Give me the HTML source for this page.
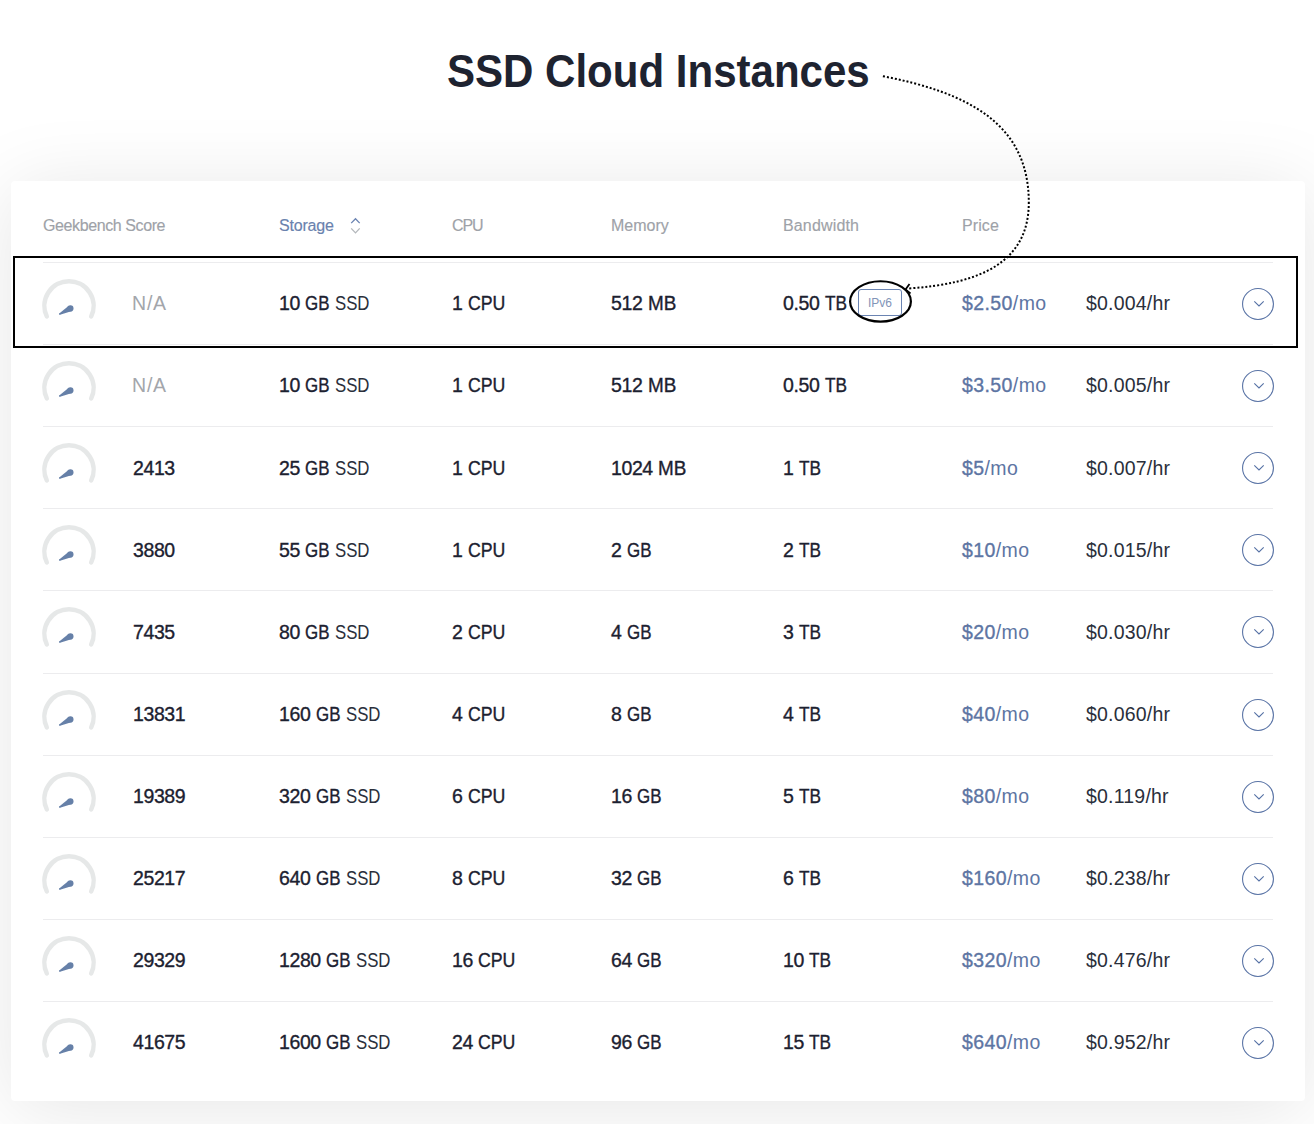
<!DOCTYPE html><html><head><meta charset="utf-8"><style>
*{margin:0;padding:0;box-sizing:border-box}
html,body{width:1314px;height:1124px;overflow:hidden;background:#fff;font-family:"Liberation Sans",sans-serif}
.title{position:absolute;left:0;top:46px;width:1314px;text-align:center;font-size:46px;font-weight:bold;color:#1e2330;letter-spacing:0px;line-height:50px;}
.title span{display:inline-block;transform:scaleX(0.914);transform-origin:50% 50%;position:relative;left:1px}
.card{position:absolute;left:11px;top:181px;width:1294px;height:920px;background:#fff;border-radius:4px;box-shadow:0 8px 80px rgba(0,0,0,0.1)}
.h{position:absolute;top:217px;font-size:16px;line-height:18px;color:#9ea2a8;-webkit-text-stroke:0.15px currentColor;white-space:nowrap;letter-spacing:-0.4px}
.sep{position:absolute;left:43px;width:1230px;height:1px;background:#ececee}
.t{position:absolute;font-size:19.5px;line-height:20px;color:#1c2130;white-space:nowrap}
.na{color:#a3a6ab}
.rg{color:#2a2f3b}
.m{-webkit-text-stroke:0.35px currentColor}
.u{display:inline-block;transform-origin:0 50%}
.d{letter-spacing:-0.4px}
.blue{color:#5d75a3}
.h.blue{color:#6a82ae}
.btn2{position:absolute;left:1242px}
.gauge{position:absolute;left:36px;width:66px;height:50px}
.box{position:absolute;left:13px;top:256px;width:1285px;height:92px;border:2px solid #000}
.ipv6{position:absolute;left:858px;top:289px;width:44px;height:27px;border:1px solid #6b84b2;border-radius:3px;font-size:12px;line-height:27px;text-align:center;color:#8194b8}
svg.ov{position:absolute;left:0;top:0}
</style></head><body>
<div class="card"></div>
<div class="title"><span>SSD Cloud Instances</span></div>
<div class="h " style="left:43px;letter-spacing:-0.4px">Geekbench Score</div>
<div class="h blue" style="left:279px;letter-spacing:-0.2px">Storage</div>
<div class="h " style="left:452px;letter-spacing:-1.1px">CPU</div>
<div class="h " style="left:611px;letter-spacing:0px">Memory</div>
<div class="h " style="left:783px;letter-spacing:0.15px">Bandwidth</div>
<div class="h " style="left:962px;letter-spacing:0.1px">Price</div>
<svg class="ov" width="1314" height="1124" style="pointer-events:none"><path d="M351.2 223.1 L355.5 218.7 L359.7 223.1" fill="none" stroke="#6b84b2" stroke-width="1.3"/><path d="M351.2 228.4 L355.5 232.9 L359.7 228.4" fill="none" stroke="#b3b7bb" stroke-width="1.3"/></svg>
<div class="sep" style="top:262px"></div>
<svg class="gauge" style="top:276px" viewBox="0 0 66 50"><path d="M10.80 40.40 A24.6 24.6 0 1 1 55.20 40.40" fill="none" stroke="#e6e8e8" stroke-width="4.5" stroke-linecap="round"/><g transform="translate(0 0.4)"><circle cx="34.4" cy="32" r="3.1" fill="#6680a8"/><circle cx="23.7" cy="37.7" r="0.75" fill="#6680a8"/><path d="M32.44 29.60 L23.23 37.12 L23.92 38.42 L35.30 34.97 Z" fill="#6680a8"/></g></svg>
<div class="t na" style="left:132px;top:293px;letter-spacing:0.8px">N/A</div>
<div class="t" style="left:279px;top:293px"><span class="m"><span class="d">10</span> <span class="u" style="transform:scaleX(0.867);margin-right:-3.75px">GB</span></span> <span class="rg"><span class="u" style="transform:scaleX(0.86);margin-right:-5.62px">SSD</span></span></div>
<div class="t m" style="left:452px;top:293px"><span class="d">1</span> <span class="u" style="transform:scaleX(0.908);margin-right:-3.79px">CPU</span></div>
<div class="t m" style="left:611px;top:293px"><span class="d">512</span> <span class="u" style="transform:scaleX(0.968);margin-right:-0.94px">MB</span></div>
<div class="t m" style="left:783px;top:293px"><span class="d">0.50</span> <span class="u" style="transform:scaleX(0.884);margin-right:-2.89px">TB</span></div>
<div class="t blue" style="left:962px;top:293px;letter-spacing:0.4px"><span class="m">$2.50</span>/mo</div>
<div class="t rg" style="left:1086px;top:293px;letter-spacing:0.2px">$0.004/hr</div>
<svg class="btn2" style="top:288px" width="32" height="32"><circle cx="16" cy="16" r="15.45" fill="none" stroke="#5a74a6" stroke-width="1.1"/><path d="M12.3 13.3 L17 17.9 L21.7 13.3" fill="none" stroke="#5671a5" stroke-width="1.1"/></svg>
<div class="sep" style="top:344px"></div>
<svg class="gauge" style="top:358px" viewBox="0 0 66 50"><path d="M10.80 40.40 A24.6 24.6 0 1 1 55.20 40.40" fill="none" stroke="#e6e8e8" stroke-width="4.5" stroke-linecap="round"/><g transform="translate(0 0.4)"><circle cx="34.4" cy="32" r="3.1" fill="#6680a8"/><circle cx="23.7" cy="37.7" r="0.75" fill="#6680a8"/><path d="M32.44 29.60 L23.23 37.12 L23.92 38.42 L35.30 34.97 Z" fill="#6680a8"/></g></svg>
<div class="t na" style="left:132px;top:375px;letter-spacing:0.8px">N/A</div>
<div class="t" style="left:279px;top:375px"><span class="m"><span class="d">10</span> <span class="u" style="transform:scaleX(0.867);margin-right:-3.75px">GB</span></span> <span class="rg"><span class="u" style="transform:scaleX(0.86);margin-right:-5.62px">SSD</span></span></div>
<div class="t m" style="left:452px;top:375px"><span class="d">1</span> <span class="u" style="transform:scaleX(0.908);margin-right:-3.79px">CPU</span></div>
<div class="t m" style="left:611px;top:375px"><span class="d">512</span> <span class="u" style="transform:scaleX(0.968);margin-right:-0.94px">MB</span></div>
<div class="t m" style="left:783px;top:375px"><span class="d">0.50</span> <span class="u" style="transform:scaleX(0.884);margin-right:-2.89px">TB</span></div>
<div class="t blue" style="left:962px;top:375px;letter-spacing:0.4px"><span class="m">$3.50</span>/mo</div>
<div class="t rg" style="left:1086px;top:375px;letter-spacing:0.2px">$0.005/hr</div>
<svg class="btn2" style="top:370px" width="32" height="32"><circle cx="16" cy="16" r="15.45" fill="none" stroke="#5a74a6" stroke-width="1.1"/><path d="M12.3 13.3 L17 17.9 L21.7 13.3" fill="none" stroke="#5671a5" stroke-width="1.1"/></svg>
<div class="sep" style="top:426px"></div>
<svg class="gauge" style="top:440px" viewBox="0 0 66 50"><path d="M10.80 40.40 A24.6 24.6 0 1 1 55.20 40.40" fill="none" stroke="#e6e8e8" stroke-width="4.5" stroke-linecap="round"/><g transform="translate(0 0.4)"><circle cx="34.4" cy="32" r="3.1" fill="#6680a8"/><circle cx="23.7" cy="37.7" r="0.75" fill="#6680a8"/><path d="M32.44 29.60 L23.23 37.12 L23.92 38.42 L35.30 34.97 Z" fill="#6680a8"/></g></svg>
<div class="t m" style="left:133px;top:458px;letter-spacing:-0.4px">2413</div>
<div class="t" style="left:279px;top:458px"><span class="m"><span class="d">25</span> <span class="u" style="transform:scaleX(0.867);margin-right:-3.75px">GB</span></span> <span class="rg"><span class="u" style="transform:scaleX(0.86);margin-right:-5.62px">SSD</span></span></div>
<div class="t m" style="left:452px;top:458px"><span class="d">1</span> <span class="u" style="transform:scaleX(0.908);margin-right:-3.79px">CPU</span></div>
<div class="t m" style="left:611px;top:458px"><span class="d">1024</span> <span class="u" style="transform:scaleX(0.968);margin-right:-0.94px">MB</span></div>
<div class="t m" style="left:783px;top:458px"><span class="d">1</span> <span class="u" style="transform:scaleX(0.884);margin-right:-2.89px">TB</span></div>
<div class="t blue" style="left:962px;top:458px;letter-spacing:0.4px"><span class="m">$5</span>/mo</div>
<div class="t rg" style="left:1086px;top:458px;letter-spacing:0.2px">$0.007/hr</div>
<svg class="btn2" style="top:452px" width="32" height="32"><circle cx="16" cy="16" r="15.45" fill="none" stroke="#5a74a6" stroke-width="1.1"/><path d="M12.3 13.3 L17 17.9 L21.7 13.3" fill="none" stroke="#5671a5" stroke-width="1.1"/></svg>
<div class="sep" style="top:508px"></div>
<svg class="gauge" style="top:522px" viewBox="0 0 66 50"><path d="M10.80 40.40 A24.6 24.6 0 1 1 55.20 40.40" fill="none" stroke="#e6e8e8" stroke-width="4.5" stroke-linecap="round"/><g transform="translate(0 0.4)"><circle cx="34.4" cy="32" r="3.1" fill="#6680a8"/><circle cx="23.7" cy="37.7" r="0.75" fill="#6680a8"/><path d="M32.44 29.60 L23.23 37.12 L23.92 38.42 L35.30 34.97 Z" fill="#6680a8"/></g></svg>
<div class="t m" style="left:133px;top:540px;letter-spacing:-0.4px">3880</div>
<div class="t" style="left:279px;top:540px"><span class="m"><span class="d">55</span> <span class="u" style="transform:scaleX(0.867);margin-right:-3.75px">GB</span></span> <span class="rg"><span class="u" style="transform:scaleX(0.86);margin-right:-5.62px">SSD</span></span></div>
<div class="t m" style="left:452px;top:540px"><span class="d">1</span> <span class="u" style="transform:scaleX(0.908);margin-right:-3.79px">CPU</span></div>
<div class="t m" style="left:611px;top:540px"><span class="d">2</span> <span class="u" style="transform:scaleX(0.867);margin-right:-3.75px">GB</span></div>
<div class="t m" style="left:783px;top:540px"><span class="d">2</span> <span class="u" style="transform:scaleX(0.884);margin-right:-2.89px">TB</span></div>
<div class="t blue" style="left:962px;top:540px;letter-spacing:0.4px"><span class="m">$10</span>/mo</div>
<div class="t rg" style="left:1086px;top:540px;letter-spacing:0.2px">$0.015/hr</div>
<svg class="btn2" style="top:534px" width="32" height="32"><circle cx="16" cy="16" r="15.45" fill="none" stroke="#5a74a6" stroke-width="1.1"/><path d="M12.3 13.3 L17 17.9 L21.7 13.3" fill="none" stroke="#5671a5" stroke-width="1.1"/></svg>
<div class="sep" style="top:590px"></div>
<svg class="gauge" style="top:604px" viewBox="0 0 66 50"><path d="M10.80 40.40 A24.6 24.6 0 1 1 55.20 40.40" fill="none" stroke="#e6e8e8" stroke-width="4.5" stroke-linecap="round"/><g transform="translate(0 0.4)"><circle cx="34.4" cy="32" r="3.1" fill="#6680a8"/><circle cx="23.7" cy="37.7" r="0.75" fill="#6680a8"/><path d="M32.44 29.60 L23.23 37.12 L23.92 38.42 L35.30 34.97 Z" fill="#6680a8"/></g></svg>
<div class="t m" style="left:133px;top:622px;letter-spacing:-0.4px">7435</div>
<div class="t" style="left:279px;top:622px"><span class="m"><span class="d">80</span> <span class="u" style="transform:scaleX(0.867);margin-right:-3.75px">GB</span></span> <span class="rg"><span class="u" style="transform:scaleX(0.86);margin-right:-5.62px">SSD</span></span></div>
<div class="t m" style="left:452px;top:622px"><span class="d">2</span> <span class="u" style="transform:scaleX(0.908);margin-right:-3.79px">CPU</span></div>
<div class="t m" style="left:611px;top:622px"><span class="d">4</span> <span class="u" style="transform:scaleX(0.867);margin-right:-3.75px">GB</span></div>
<div class="t m" style="left:783px;top:622px"><span class="d">3</span> <span class="u" style="transform:scaleX(0.884);margin-right:-2.89px">TB</span></div>
<div class="t blue" style="left:962px;top:622px;letter-spacing:0.4px"><span class="m">$20</span>/mo</div>
<div class="t rg" style="left:1086px;top:622px;letter-spacing:0.2px">$0.030/hr</div>
<svg class="btn2" style="top:616px" width="32" height="32"><circle cx="16" cy="16" r="15.45" fill="none" stroke="#5a74a6" stroke-width="1.1"/><path d="M12.3 13.3 L17 17.9 L21.7 13.3" fill="none" stroke="#5671a5" stroke-width="1.1"/></svg>
<div class="sep" style="top:673px"></div>
<svg class="gauge" style="top:687px" viewBox="0 0 66 50"><path d="M10.80 40.40 A24.6 24.6 0 1 1 55.20 40.40" fill="none" stroke="#e6e8e8" stroke-width="4.5" stroke-linecap="round"/><g transform="translate(0 0.4)"><circle cx="34.4" cy="32" r="3.1" fill="#6680a8"/><circle cx="23.7" cy="37.7" r="0.75" fill="#6680a8"/><path d="M32.44 29.60 L23.23 37.12 L23.92 38.42 L35.30 34.97 Z" fill="#6680a8"/></g></svg>
<div class="t m" style="left:133px;top:704px;letter-spacing:-0.4px">13831</div>
<div class="t" style="left:279px;top:704px"><span class="m"><span class="d">160</span> <span class="u" style="transform:scaleX(0.867);margin-right:-3.75px">GB</span></span> <span class="rg"><span class="u" style="transform:scaleX(0.86);margin-right:-5.62px">SSD</span></span></div>
<div class="t m" style="left:452px;top:704px"><span class="d">4</span> <span class="u" style="transform:scaleX(0.908);margin-right:-3.79px">CPU</span></div>
<div class="t m" style="left:611px;top:704px"><span class="d">8</span> <span class="u" style="transform:scaleX(0.867);margin-right:-3.75px">GB</span></div>
<div class="t m" style="left:783px;top:704px"><span class="d">4</span> <span class="u" style="transform:scaleX(0.884);margin-right:-2.89px">TB</span></div>
<div class="t blue" style="left:962px;top:704px;letter-spacing:0.4px"><span class="m">$40</span>/mo</div>
<div class="t rg" style="left:1086px;top:704px;letter-spacing:0.2px">$0.060/hr</div>
<svg class="btn2" style="top:699px" width="32" height="32"><circle cx="16" cy="16" r="15.45" fill="none" stroke="#5a74a6" stroke-width="1.1"/><path d="M12.3 13.3 L17 17.9 L21.7 13.3" fill="none" stroke="#5671a5" stroke-width="1.1"/></svg>
<div class="sep" style="top:755px"></div>
<svg class="gauge" style="top:769px" viewBox="0 0 66 50"><path d="M10.80 40.40 A24.6 24.6 0 1 1 55.20 40.40" fill="none" stroke="#e6e8e8" stroke-width="4.5" stroke-linecap="round"/><g transform="translate(0 0.4)"><circle cx="34.4" cy="32" r="3.1" fill="#6680a8"/><circle cx="23.7" cy="37.7" r="0.75" fill="#6680a8"/><path d="M32.44 29.60 L23.23 37.12 L23.92 38.42 L35.30 34.97 Z" fill="#6680a8"/></g></svg>
<div class="t m" style="left:133px;top:786px;letter-spacing:-0.4px">19389</div>
<div class="t" style="left:279px;top:786px"><span class="m"><span class="d">320</span> <span class="u" style="transform:scaleX(0.867);margin-right:-3.75px">GB</span></span> <span class="rg"><span class="u" style="transform:scaleX(0.86);margin-right:-5.62px">SSD</span></span></div>
<div class="t m" style="left:452px;top:786px"><span class="d">6</span> <span class="u" style="transform:scaleX(0.908);margin-right:-3.79px">CPU</span></div>
<div class="t m" style="left:611px;top:786px"><span class="d">16</span> <span class="u" style="transform:scaleX(0.867);margin-right:-3.75px">GB</span></div>
<div class="t m" style="left:783px;top:786px"><span class="d">5</span> <span class="u" style="transform:scaleX(0.884);margin-right:-2.89px">TB</span></div>
<div class="t blue" style="left:962px;top:786px;letter-spacing:0.4px"><span class="m">$80</span>/mo</div>
<div class="t rg" style="left:1086px;top:786px;letter-spacing:0.2px">$0.119/hr</div>
<svg class="btn2" style="top:781px" width="32" height="32"><circle cx="16" cy="16" r="15.45" fill="none" stroke="#5a74a6" stroke-width="1.1"/><path d="M12.3 13.3 L17 17.9 L21.7 13.3" fill="none" stroke="#5671a5" stroke-width="1.1"/></svg>
<div class="sep" style="top:837px"></div>
<svg class="gauge" style="top:851px" viewBox="0 0 66 50"><path d="M10.80 40.40 A24.6 24.6 0 1 1 55.20 40.40" fill="none" stroke="#e6e8e8" stroke-width="4.5" stroke-linecap="round"/><g transform="translate(0 0.4)"><circle cx="34.4" cy="32" r="3.1" fill="#6680a8"/><circle cx="23.7" cy="37.7" r="0.75" fill="#6680a8"/><path d="M32.44 29.60 L23.23 37.12 L23.92 38.42 L35.30 34.97 Z" fill="#6680a8"/></g></svg>
<div class="t m" style="left:133px;top:868px;letter-spacing:-0.4px">25217</div>
<div class="t" style="left:279px;top:868px"><span class="m"><span class="d">640</span> <span class="u" style="transform:scaleX(0.867);margin-right:-3.75px">GB</span></span> <span class="rg"><span class="u" style="transform:scaleX(0.86);margin-right:-5.62px">SSD</span></span></div>
<div class="t m" style="left:452px;top:868px"><span class="d">8</span> <span class="u" style="transform:scaleX(0.908);margin-right:-3.79px">CPU</span></div>
<div class="t m" style="left:611px;top:868px"><span class="d">32</span> <span class="u" style="transform:scaleX(0.867);margin-right:-3.75px">GB</span></div>
<div class="t m" style="left:783px;top:868px"><span class="d">6</span> <span class="u" style="transform:scaleX(0.884);margin-right:-2.89px">TB</span></div>
<div class="t blue" style="left:962px;top:868px;letter-spacing:0.4px"><span class="m">$160</span>/mo</div>
<div class="t rg" style="left:1086px;top:868px;letter-spacing:0.2px">$0.238/hr</div>
<svg class="btn2" style="top:863px" width="32" height="32"><circle cx="16" cy="16" r="15.45" fill="none" stroke="#5a74a6" stroke-width="1.1"/><path d="M12.3 13.3 L17 17.9 L21.7 13.3" fill="none" stroke="#5671a5" stroke-width="1.1"/></svg>
<div class="sep" style="top:919px"></div>
<svg class="gauge" style="top:933px" viewBox="0 0 66 50"><path d="M10.80 40.40 A24.6 24.6 0 1 1 55.20 40.40" fill="none" stroke="#e6e8e8" stroke-width="4.5" stroke-linecap="round"/><g transform="translate(0 0.4)"><circle cx="34.4" cy="32" r="3.1" fill="#6680a8"/><circle cx="23.7" cy="37.7" r="0.75" fill="#6680a8"/><path d="M32.44 29.60 L23.23 37.12 L23.92 38.42 L35.30 34.97 Z" fill="#6680a8"/></g></svg>
<div class="t m" style="left:133px;top:950px;letter-spacing:-0.4px">29329</div>
<div class="t" style="left:279px;top:950px"><span class="m"><span class="d">1280</span> <span class="u" style="transform:scaleX(0.867);margin-right:-3.75px">GB</span></span> <span class="rg"><span class="u" style="transform:scaleX(0.86);margin-right:-5.62px">SSD</span></span></div>
<div class="t m" style="left:452px;top:950px"><span class="d">16</span> <span class="u" style="transform:scaleX(0.908);margin-right:-3.79px">CPU</span></div>
<div class="t m" style="left:611px;top:950px"><span class="d">64</span> <span class="u" style="transform:scaleX(0.867);margin-right:-3.75px">GB</span></div>
<div class="t m" style="left:783px;top:950px"><span class="d">10</span> <span class="u" style="transform:scaleX(0.884);margin-right:-2.89px">TB</span></div>
<div class="t blue" style="left:962px;top:950px;letter-spacing:0.4px"><span class="m">$320</span>/mo</div>
<div class="t rg" style="left:1086px;top:950px;letter-spacing:0.2px">$0.476/hr</div>
<svg class="btn2" style="top:945px" width="32" height="32"><circle cx="16" cy="16" r="15.45" fill="none" stroke="#5a74a6" stroke-width="1.1"/><path d="M12.3 13.3 L17 17.9 L21.7 13.3" fill="none" stroke="#5671a5" stroke-width="1.1"/></svg>
<div class="sep" style="top:1001px"></div>
<svg class="gauge" style="top:1015px" viewBox="0 0 66 50"><path d="M10.80 40.40 A24.6 24.6 0 1 1 55.20 40.40" fill="none" stroke="#e6e8e8" stroke-width="4.5" stroke-linecap="round"/><g transform="translate(0 0.4)"><circle cx="34.4" cy="32" r="3.1" fill="#6680a8"/><circle cx="23.7" cy="37.7" r="0.75" fill="#6680a8"/><path d="M32.44 29.60 L23.23 37.12 L23.92 38.42 L35.30 34.97 Z" fill="#6680a8"/></g></svg>
<div class="t m" style="left:133px;top:1032px;letter-spacing:-0.4px">41675</div>
<div class="t" style="left:279px;top:1032px"><span class="m"><span class="d">1600</span> <span class="u" style="transform:scaleX(0.867);margin-right:-3.75px">GB</span></span> <span class="rg"><span class="u" style="transform:scaleX(0.86);margin-right:-5.62px">SSD</span></span></div>
<div class="t m" style="left:452px;top:1032px"><span class="d">24</span> <span class="u" style="transform:scaleX(0.908);margin-right:-3.79px">CPU</span></div>
<div class="t m" style="left:611px;top:1032px"><span class="d">96</span> <span class="u" style="transform:scaleX(0.867);margin-right:-3.75px">GB</span></div>
<div class="t m" style="left:783px;top:1032px"><span class="d">15</span> <span class="u" style="transform:scaleX(0.884);margin-right:-2.89px">TB</span></div>
<div class="t blue" style="left:962px;top:1032px;letter-spacing:0.4px"><span class="m">$640</span>/mo</div>
<div class="t rg" style="left:1086px;top:1032px;letter-spacing:0.2px">$0.952/hr</div>
<svg class="btn2" style="top:1027px" width="32" height="32"><circle cx="16" cy="16" r="15.45" fill="none" stroke="#5a74a6" stroke-width="1.1"/><path d="M12.3 13.3 L17 17.9 L21.7 13.3" fill="none" stroke="#5671a5" stroke-width="1.1"/></svg>
<div class="ipv6">IPv6</div>
<div class="box"></div>
<svg class="ov" width="1314" height="1124"><ellipse cx="880.5" cy="301.45" rx="30.4" ry="20.2" fill="none" stroke="#000" stroke-width="2.2"/><path d="M882.9 76.2 C965.4 92.3, 1028.8 122, 1028.8 202.4 C1028.8 261.4, 982.1 283.9, 907.3 288.5" fill="none" stroke="#000" stroke-width="2" stroke-dasharray="2 2"/><path d="M909.5 284 L905.5 289.5 L910.5 293.5" fill="none" stroke="#000" stroke-width="1.8"/></svg>
</body></html>
